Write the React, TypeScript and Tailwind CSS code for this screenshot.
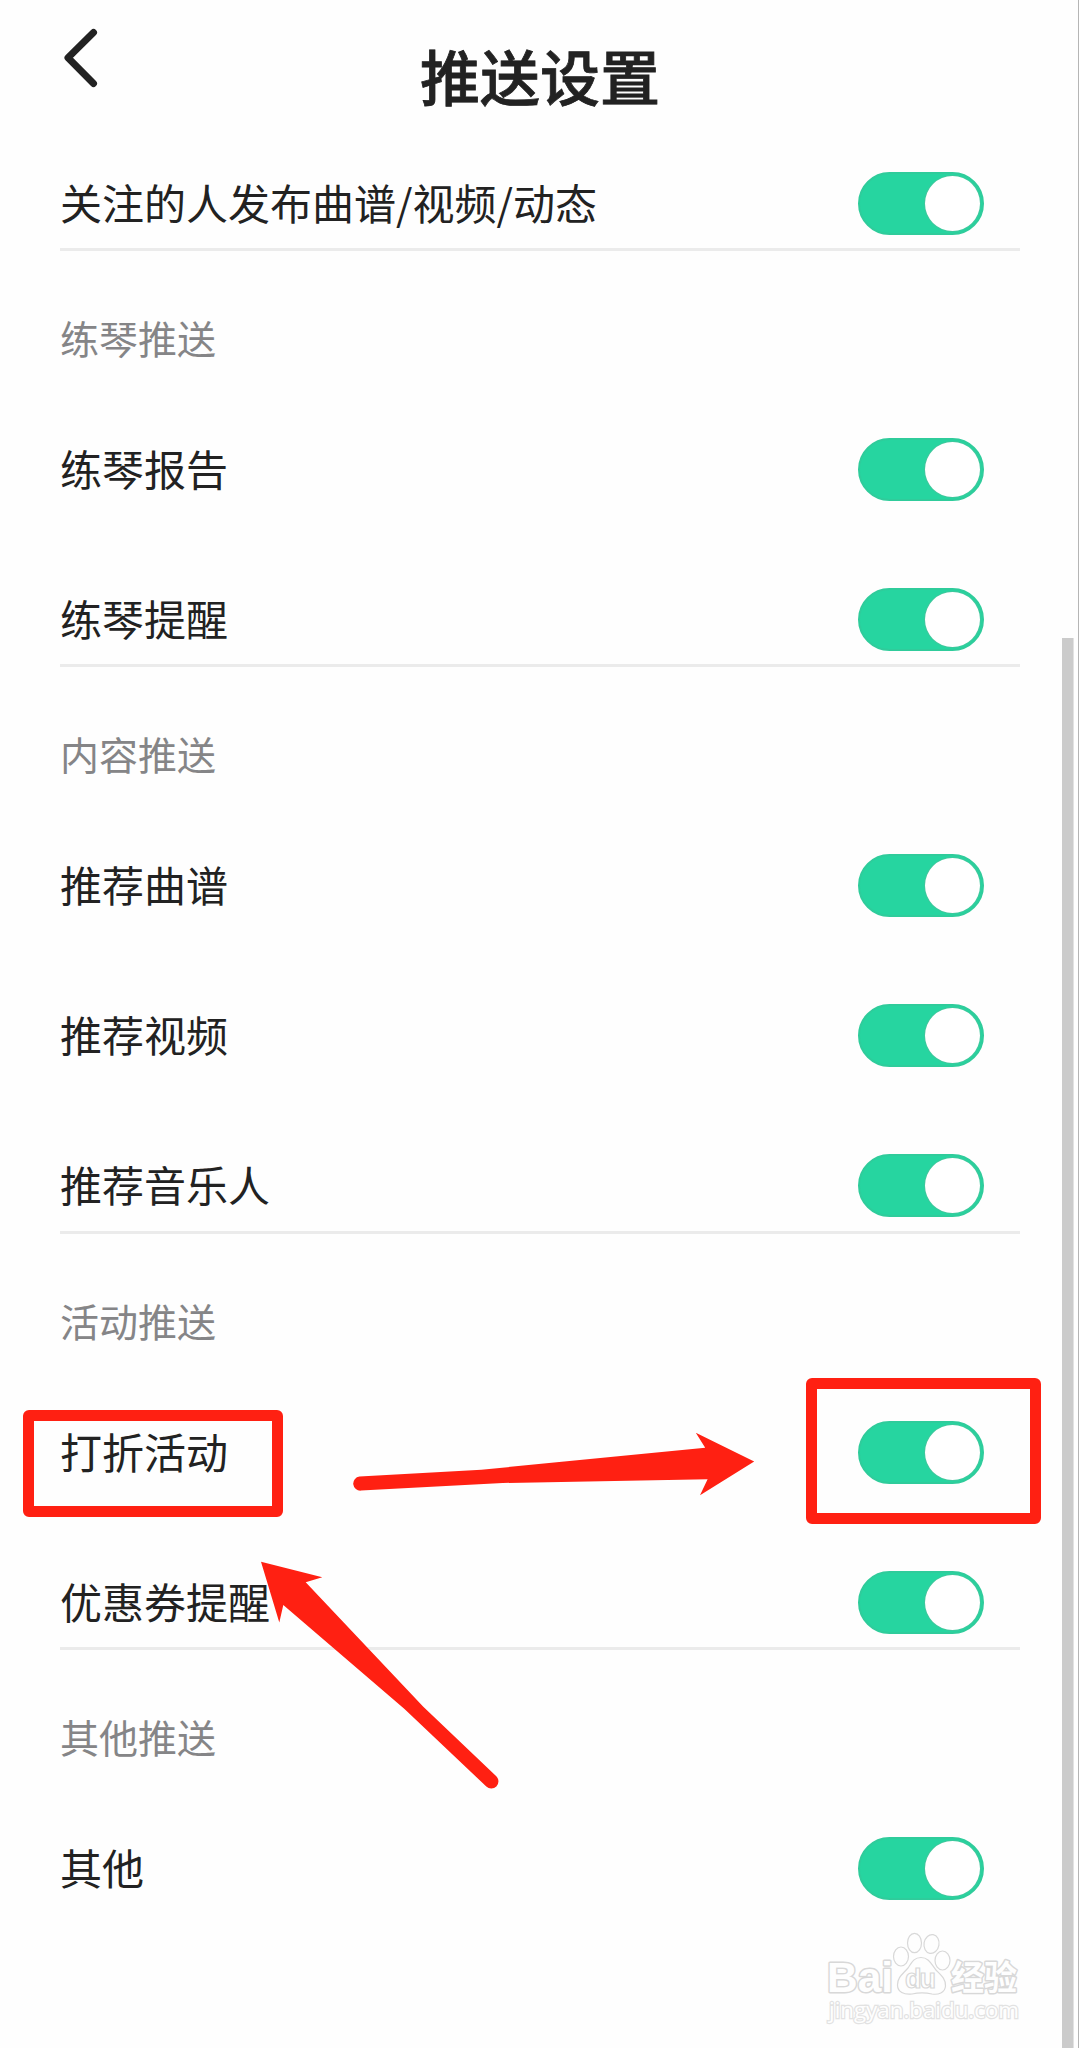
import React from "react";

type Group = { title?: string; items: string[]; last?: boolean };

const groups: Group[] = [
  { items: ["关注的人发布曲谱/视频/动态"] },
  { title: "练琴推送", items: ["练琴报告", "练琴提醒"] },
  { title: "内容推送", items: ["推荐曲谱", "推荐视频", "推荐音乐人"] },
  { title: "活动推送", items: ["打折活动", "优惠券提醒"] },
  { title: "其他推送", items: ["其他"], last: true },
];

function Toggle() {
  return (
    <button
      role="switch"
      aria-checked="true"
      className="mr-9 mt-px flex h-[63px] w-[126px] items-center justify-end rounded-full border-2 border-[#2fcc9b] bg-[#26d5a0] pr-0.5"
    >
      <span className="size-[55px] rounded-full bg-white ring-1 ring-[#3fc79c]" />
    </button>
  );
}

function Row({ label, divided }: { label: string; divided: boolean }) {
  return (
    <div
      className={
        divided
          ? "flex h-[123.2px] items-start border-b-[3px] border-[#ebebeb] pt-[43px]"
          : "flex h-[150px] items-start pt-[43px]"
      }
    >
      <div className="flex h-16 w-full items-center justify-between">
        <span className="whitespace-nowrap pb-0.5 text-[42px] leading-[64px] text-[#222222]">{label}</span>
        <Toggle />
      </div>
    </div>
  );
}

function Section({ group }: { group: Group }) {
  return (
    <section>
      {group.title && (
        <h2 className="h-[143px] pt-14 text-[39px] leading-[60px] text-[#858587]">{group.title}</h2>
      )}
      {group.items.map((item, i) => (
        <Row key={item} label={item} divided={!group.last && i === group.items.length - 1} />
      ))}
    </section>
  );
}

function Arrows() {
  return (
    <svg className="pointer-events-none absolute left-0 top-0" width="1079" height="2048" fill="#ff2012">
      <path d="M359.5 1476.6 L481.4 1469.7 L705.2 1447.7 L695.8 1432.7 L754.2 1461.5 L700 1495.3 L707.6 1479.3 L502.6 1483 L361 1490.6 A7 7 0 0 1 359.5 1476.6Z" />
      <path d="M261 1561.7 L322.3 1577.3 L305.7 1582.3 L423.3 1706.7 L496.3 1776.3 A7 7 0 0 1 486.3 1786.5 L404.5 1709 L283.3 1605 L279.3 1622.5Z" />
    </svg>
  );
}

function Watermark() {
  return (
    <svg
      className="pointer-events-none absolute left-[820px] top-[1925px]"
      width="210"
      height="110"
      fill="#fefefe"
      stroke="#d8d8d8"
      strokeWidth="1.2"
    >
      <g paintOrder="stroke" strokeWidth="3" strokeLinejoin="round">
        <text x="7" y="67" fontSize="43" fontWeight="700" fontFamily="Liberation Sans, sans-serif" textLength="66" lengthAdjust="spacingAndGlyphs">Bai</text>
        <text x="131" y="65" fontSize="34" fontWeight="700" fontFamily="Noto Sans CJK SC, sans-serif" textLength="66" lengthAdjust="spacingAndGlyphs">经验</text>
      </g>
      <ellipse cx="81" cy="31.5" rx="7.5" ry="9.5" />
      <ellipse cx="94.5" cy="18" rx="7" ry="9.7" />
      <ellipse cx="111.5" cy="19" rx="7.5" ry="9.5" transform="rotate(10 111.5 19)" />
      <ellipse cx="122.500" cy="35.5" rx="7.5" ry="9.5" />
      <path d="M101 32.5 C109 32.5 111 39 116 45 C121 50 126 54 125.5 61 C125 68 118 70 112 69 C105 67.5 99 67.5 92 69 C84 70 77.5 67 77.5 60 C77.5 52 83 49 88 43 C92 37 94 32.5 101 32.5Z" />
      <text x="85" y="63" fontSize="27" fontWeight="700" fontFamily="Liberation Sans, sans-serif" textLength="31">du</text>
      <text x="9" y="93" fontSize="22" fontFamily="Open Sans, sans-serif" paintOrder="stroke" strokeWidth="2.4" stroke="#e2e2e2" textLength="190" lengthAdjust="spacingAndGlyphs">jingyan.baidu.com</text>
    </svg>
  );
}

export default function App() {
  return (
    <main className="relative h-[2048px] w-[1079px] overflow-hidden border-r border-[#b5b5b5] bg-[#fefefe] font-['Noto_Sans_CJK_SC',sans-serif]">
      <header className="grid h-32 grid-cols-[1fr_auto_1fr] items-start pl-[60px] pr-[58px]">
        <button aria-label="返回" className="mt-6 w-10">
          <svg width="40" height="68" fill="none" stroke="#222222" strokeWidth="7" strokeLinecap="round" strokeLinejoin="round">
            <path d="M33.5 8.5 L8 33.7 L33.5 59.5" />
          </svg>
        </button>
        <h1 className="mt-[31px] text-[60px] font-medium leading-[88px] text-[#222222] [-webkit-text-stroke:0.8px_#222222]">
          推送设置
        </h1>
      </header>
      <div className="ml-[60px] w-[960px]">
        {groups.map((g) => (
          <Section key={g.items[0]} group={g} />
        ))}
      </div>
      <div className="absolute bottom-0 right-1 h-[1410px] w-3 border-r border-[#e2e2e2] bg-[#cbcbcb]" />
      <div className="absolute left-[23px] top-[1410px] h-[107px] w-[260px] rounded-md border-[11px] border-[#ff2012]" />
      <div className="absolute left-[806px] top-[1378px] h-[146px] w-[235px] rounded-md border-[11px] border-[#ff2012]" />
      <Arrows />
      <Watermark />
    </main>
  );
}
